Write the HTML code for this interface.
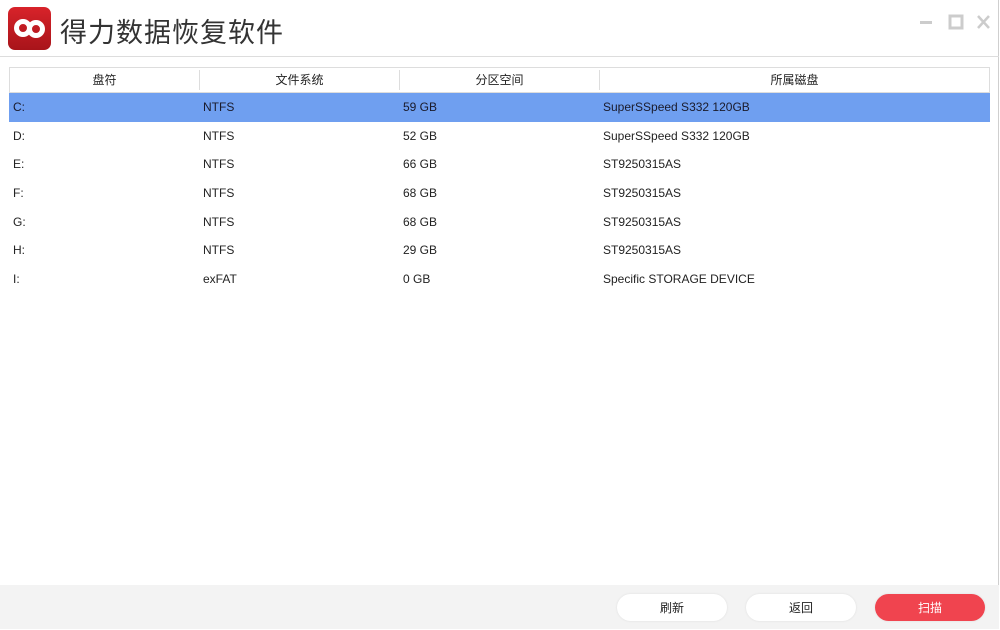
<!DOCTYPE html>
<html><head><meta charset="utf-8"><style>
*{margin:0;padding:0;box-sizing:border-box}
body{width:1000px;height:630px;background:#fff;font-family:"Liberation Sans","Noto Sans CJK SC",sans-serif;position:relative;overflow:hidden;font-size:12px;color:#222}
.frame{position:absolute;left:0;top:0;width:999px;height:629px;border-right:1px solid #cfcfcf;border-bottom:1px solid #cfcfcf}
.logo{position:absolute;left:8px;top:7px;width:43px;height:43px;border-radius:7px;background:linear-gradient(#d8232a,#a8141a)}
.title{position:absolute;left:60px;top:11px;font-size:27px;color:#333;font-family:"Noto Sans CJK SC",sans-serif;letter-spacing:1px}
.sep{position:absolute;left:0;top:56px;width:999px;height:1px;background:#ddd}
.tbl{position:absolute;left:9px;top:67px;width:981px;height:520px}
.hd{height:26px;border:1px solid #ddd;display:flex}
.hd div{width:190px;text-align:center;border-right:1px solid #ddd;font-family:"Noto Sans CJK SC",sans-serif;font-size:12px;margin:2px 0;line-height:20px}
.hd div:nth-child(2),.hd div:nth-child(3){width:200px}
.hd div:last-child{flex:1;border:none}
.row{height:28.7px;display:flex;line-height:28px;font-size:12px}
.row span{display:block;padding-left:4px}
.row span:nth-child(1){width:190px}.row span:nth-child(2),.row span:nth-child(3){width:200px}
.sel{background:#6f9ff0;color:#1a1a2a}
.foot{position:absolute;left:0;top:585px;width:999px;height:44px;background:#f3f3f3}
.btn{position:absolute;top:594px;width:110px;height:27px;border-radius:14px;background:#fff;text-align:center;line-height:27px;font-family:"Noto Sans CJK SC",sans-serif;font-size:12px;box-shadow:0 0 2px #ddd}
</style></head><body>
<div class="frame"></div>
<div class="logo"><svg width="43" height="43" viewBox="0 0 43 43"><g fill="none" stroke="#fff" stroke-width="5"><circle cx="15" cy="21" r="6.5"/><circle cx="28" cy="22" r="6.5"/></g></svg></div>
<div class="title">得力数据恢复软件</div>
<svg style="position:absolute;left:920px;top:14px" width="70" height="18"><rect x="0" y="7" width="12" height="3" fill="#ccc"/><rect x="30" y="2" width="12" height="12" fill="none" stroke="#ccc" stroke-width="3"/><path d="M58 2l11 12M69 2L58 14" stroke="#ccc" stroke-width="2.5"/></svg>
<div class="sep"></div>
<div class="tbl">
<div class="hd"><div>盘符</div><div>文件系统</div><div>分区空间</div><div>所属磁盘</div></div>
<div class="row sel"><span>C:</span><span>NTFS</span><span>59 GB</span><span>SuperSSpeed S332 120GB</span></div>
<div class="row"><span>D:</span><span>NTFS</span><span>52 GB</span><span>SuperSSpeed S332 120GB</span></div>
<div class="row"><span>E:</span><span>NTFS</span><span>66 GB</span><span>ST9250315AS</span></div>
<div class="row"><span>F:</span><span>NTFS</span><span>68 GB</span><span>ST9250315AS</span></div>
<div class="row"><span>G:</span><span>NTFS</span><span>68 GB</span><span>ST9250315AS</span></div>
<div class="row"><span>H:</span><span>NTFS</span><span>29 GB</span><span>ST9250315AS</span></div>
<div class="row"><span>I:</span><span>exFAT</span><span>0 GB</span><span>Specific STORAGE DEVICE</span></div>
</div>
<div class="foot"></div>
<div class="btn" style="left:617px">刷新</div>
<div class="btn" style="left:746px">返回</div>
<div class="btn" style="left:875px;background:#f0444f;color:#fff">扫描</div>
</body></html>
